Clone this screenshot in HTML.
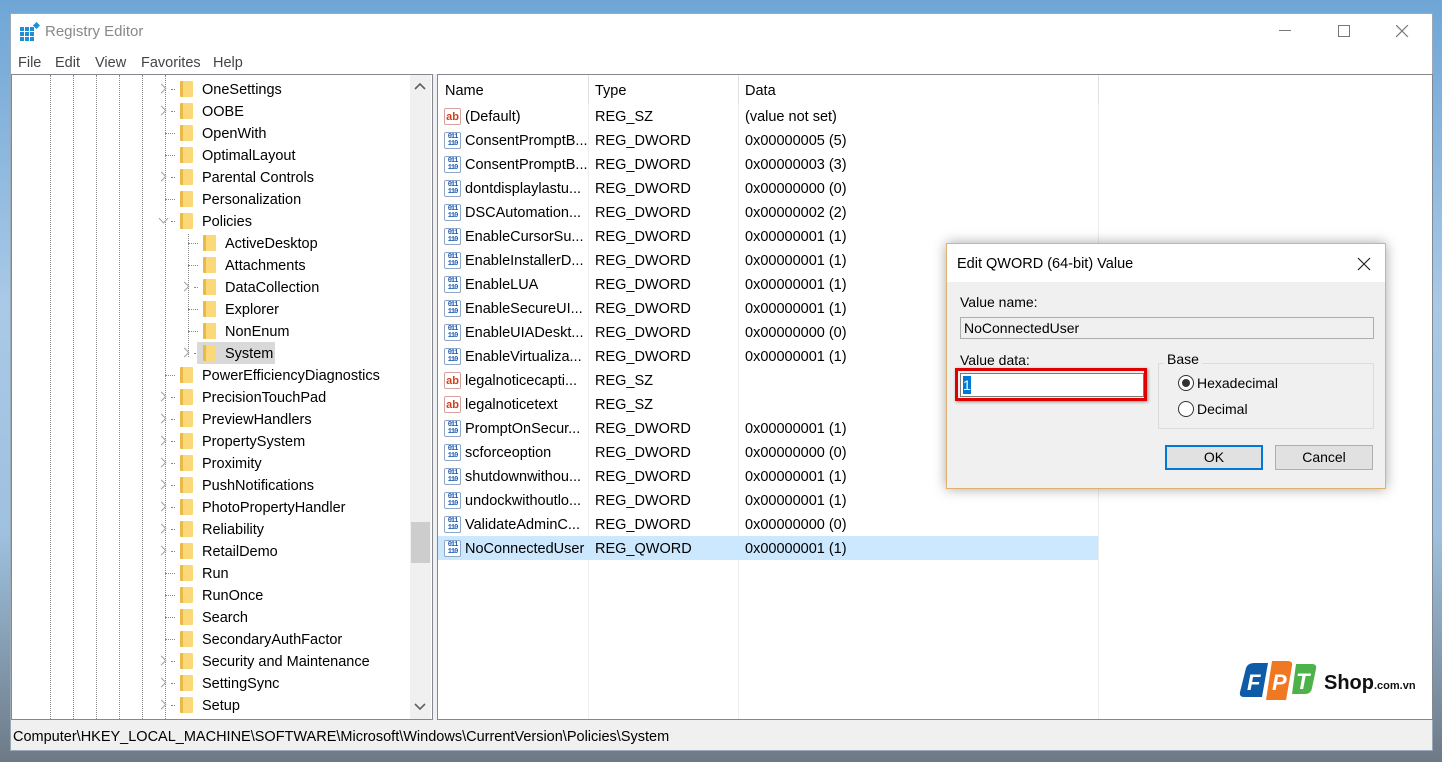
<!DOCTYPE html><html><head><style>
*{margin:0;padding:0;box-sizing:border-box}
body{width:1442px;height:762px;overflow:hidden;position:relative;font-family:"Liberation Sans",sans-serif;font-size:14.5px;color:#000;background:linear-gradient(180deg,#6fa6d6 0%,#a9c9e6 40%,#9ec1df 70%,#6d7a86 100%)}
.a{position:absolute}
.win{left:10px;top:13px;width:1423px;height:738px;background:#f0f0f0;border:1px solid #9aa8b8}
.row{position:absolute;height:22px;line-height:22px;white-space:nowrap}
.fold{position:absolute;width:13px;height:16px;background:linear-gradient(90deg,#e9b94a 0 3px,#fbd978 3px);border-radius:1px}
.chev{position:absolute;width:7px;height:7px;border-right:1.6px solid #a0a0a0;border-bottom:1.6px solid #a0a0a0}
.vl{position:absolute;width:0;border-left:1px dotted #888}
.hl{position:absolute;height:0;border-top:1px dotted #888}
.lr{position:absolute;left:438px;width:660px;height:24px;line-height:24px;white-space:nowrap}
.lr span{position:absolute}
.ico{position:absolute;left:6px;top:4px;width:17px;height:17px;border:1px solid #8ea6c8;background:#fff;border-radius:2px;font:bold 7px/7px "Liberation Mono",monospace;color:#1b5bb0;text-align:center;padding-top:1px;letter-spacing:-1px}
.ab{color:#d04020;font:bold 11px/14px "Liberation Sans",sans-serif;border-color:#d9a0a0;letter-spacing:0}
.d{font-size:14px}
</style></head><body>
<div class="a win"></div>
<div class="a" style="left:11px;top:14px;width:1421px;height:60px;background:#fff"></div>
<svg class="a" style="left:20px;top:22px" width="20" height="20"><g fill="#1e8fd6"><rect x="0" y="5" width="4" height="4"/><rect x="5" y="5" width="4" height="4"/><rect x="10" y="5" width="4" height="4"/><rect x="0" y="10" width="4" height="4"/><rect x="5" y="10" width="4" height="4"/><rect x="10" y="10" width="4" height="4"/><rect x="0" y="15" width="4" height="4"/><rect x="5" y="15" width="4" height="4"/><rect x="10" y="15" width="4" height="4"/></g><rect x="14" y="1" width="5" height="5" fill="#1e8fd6" transform="rotate(45 16.5 3.5)"/></svg>
<div class="a" style="left:45px;top:23px;color:#888;font-size:15px">Registry Editor</div>
<div class="a" style="left:1279px;top:30px;width:12px;height:1px;background:#777"></div>
<div class="a" style="left:1338px;top:25px;width:12px;height:12px;border:1px solid #777"></div>
<svg class="a" style="left:1396px;top:25px" width="13" height="13"><path d="M0 0L12 12M12 0L0 12" stroke="#777" stroke-width="1.2"/></svg>
<div class="a" style="left:18px;top:55px;color:#444">File</div>
<div class="a" style="left:55px;top:55px;color:#444">Edit</div>
<div class="a" style="left:95px;top:55px;color:#444">View</div>
<div class="a" style="left:141px;top:55px;color:#444">Favorites</div>
<div class="a" style="left:213px;top:55px;color:#444">Help</div>
<div class="a" style="left:11px;top:74px;width:422px;height:646px;background:#fff;border:1px solid #828790;overflow:hidden">
<div class="vl" style="left:38px;top:0;height:650px"></div>
<div class="vl" style="left:61px;top:0;height:650px"></div>
<div class="vl" style="left:84px;top:0;height:650px"></div>
<div class="vl" style="left:107px;top:0;height:650px"></div>
<div class="vl" style="left:130px;top:0;height:650px"></div>
<div class="vl" style="left:153px;top:0;height:650px"></div>
<div class="vl" style="left:176px;top:159px;height:123px"></div>
</div>
<div id="tree"></div>
<div class="a" style="left:410px;top:75px;width:21px;height:644px;background:#f0f0f0"></div>
<div class="a" style="left:411px;top:522px;width:19px;height:41px;background:#cdcdcd"></div>
<svg class="a" style="left:414px;top:83px" width="12" height="8"><path d="M1 6L6 1L11 6" fill="none" stroke="#606060" stroke-width="1.6"/></svg>
<svg class="a" style="left:414px;top:703px" width="12" height="8"><path d="M1 1L6 6L11 1" fill="none" stroke="#606060" stroke-width="1.6"/></svg>
<div class="a" style="left:437px;top:74px;width:996px;height:646px;background:#fff;border:1px solid #828790"></div>
<div class="a" style="left:588px;top:75px;width:1px;height:644px;background:#eeeeee"></div>
<div class="a" style="left:738px;top:75px;width:1px;height:644px;background:#eeeeee"></div>
<div class="a" style="left:1098px;top:75px;width:1px;height:644px;background:#eeeeee"></div>
<div class="a" style="left:588px;top:76px;width:1px;height:28px;background:#e0e0e0"></div>
<div class="a" style="left:738px;top:76px;width:1px;height:28px;background:#e0e0e0"></div>
<div class="a" style="left:1098px;top:76px;width:1px;height:28px;background:#e0e0e0"></div>
<div class="a" style="left:445px;top:83px">Name</div>
<div class="a" style="left:595px;top:83px">Type</div>
<div class="a" style="left:745px;top:83px">Data</div>
<div id="list"></div>
<div class="a" style="left:13px;top:729px;font-size:14.5px">Computer\HKEY_LOCAL_MACHINE\SOFTWARE\Microsoft\Windows\CurrentVersion\Policies\System</div>
<svg class="a" style="left:1238px;top:660px" width="82" height="42">
<path d="M8 8Q10 3 16 3H30L24 37H6Q1 37 2 32Z" fill="#0f5ba8"/>
<path d="M34 1H50Q55 1 54 6L48 40H28Z" fill="#f07822"/>
<path d="M58 4H74Q79 4 78 9L74 28Q73 34 67 34H54Z" fill="#4db24a"/>
<text x="9" y="30" fill="#fff" font-family="Liberation Sans" font-style="italic" font-weight="bold" font-size="22">F</text>
<text x="34" y="30" fill="#fff" font-family="Liberation Sans" font-style="italic" font-weight="bold" font-size="22">P</text>
<text x="58" y="29" fill="#fff" font-family="Liberation Sans" font-style="italic" font-weight="bold" font-size="22">T</text>
</svg>
<div class="a" style="left:1324px;top:672px;font-weight:bold;font-size:20px;color:#111">Shop<span style="font-size:11px">.com.vn</span></div>
<div class="a" style="left:946px;top:243px;width:440px;height:246px;background:#f0f0f0;border:1px solid #e0b070;box-shadow:0 0 12px rgba(0,0,0,.35)">
<div class="a" style="left:0;top:0;width:438px;height:38px;background:#fff"></div>
<div class="a" style="left:10px;top:12px;font-size:14.5px">Edit QWORD (64-bit) Value</div>
<svg class="a" style="left:410px;top:13px" width="14" height="14"><path d="M1 1L13 13M13 1L1 13" stroke="#222" stroke-width="1.2"/></svg>
<div class="a d" style="left:13px;top:50px">Value name:</div>
<div class="a d" style="left:13px;top:73px;width:414px;height:22px;border:1px solid #adadad;background:#f0f0f0;line-height:20px;padding-left:3px">NoConnectedUser</div>
<div class="a d" style="left:13px;top:108px">Value data:</div>
<div class="a" style="left:8px;top:124px;width:192px;height:33px;border:3px solid #e00000;box-shadow:1px 1px 3px rgba(0,0,0,.4)"></div>
<div class="a" style="left:13px;top:129px;width:184px;height:24px;border:1px solid #7a7a7a;background:#fff"></div>
<div class="a" style="left:16px;top:132px;width:8px;height:18px;background:#0078d7;color:#fff;font-size:14px;line-height:18px">1</div>
<div class="a" style="left:211px;top:119px;width:216px;height:66px;border:1px solid #dcdcdc"></div>
<div class="a d" style="left:217px;top:107px;background:#f0f0f0;padding:0 3px">Base</div>
<div class="a" style="left:231px;top:131px;width:16px;height:16px;border:1px solid #333;border-radius:50%;background:#fff"></div>
<div class="a" style="left:235px;top:135px;width:8px;height:8px;border-radius:50%;background:#333"></div>
<div class="a d" style="left:250px;top:131px">Hexadecimal</div>
<div class="a" style="left:231px;top:157px;width:16px;height:16px;border:1px solid #333;border-radius:50%;background:#fff"></div>
<div class="a d" style="left:250px;top:157px">Decimal</div>
<div class="a d" style="left:218px;top:201px;width:98px;height:25px;border:1px solid #0078d7;background:#e1e1e1;text-align:center;line-height:23px;box-shadow:inset 0 0 0 1px #0078d7">OK</div>
<div class="a d" style="left:328px;top:201px;width:98px;height:25px;border:1px solid #adadad;background:#e1e1e1;text-align:center;line-height:23px">Cancel</div>
</div>
<script>
var T=[["OneSettings",1,0],["OOBE",1,0],["OpenWith",0,0],["OptimalLayout",0,0],["Parental Controls",1,0],["Personalization",0,0],["Policies",2,0],["ActiveDesktop",0,1],["Attachments",0,1],["DataCollection",1,1],["Explorer",0,1],["NonEnum",0,1],["System",1,1],["PowerEfficiencyDiagnostics",0,0],["PrecisionTouchPad",1,0],["PreviewHandlers",1,0],["PropertySystem",1,0],["Proximity",1,0],["PushNotifications",1,0],["PhotoPropertyHandler",1,0],["Reliability",1,0],["RetailDemo",1,0],["Run",0,0],["RunOnce",0,0],["Search",0,0],["SecondaryAuthFactor",0,0],["Security and Maintenance",1,0],["SettingSync",1,0],["Setup",1,0],["",0,0]];
var h="";T.forEach(function(t,i){var top=78+22*i,o=t[2]?23:0;if(top>712)return;
h+='<div class="hl" style="left:'+(t[1]?171:165)+'px;top:'+(top+11)+'px;width:'+(t[1]?4:10)+'px;'+(o?'margin-left:23px;':'')+'"></div>';
if(t[1]==1)h+='<div class="chev" style="left:'+(158+o)+'px;top:'+(top+7)+'px;transform:rotate(-45deg)"></div>';
if(t[1]==2)h+='<div class="chev" style="left:'+(160+o)+'px;top:'+(top+5)+'px;transform:rotate(45deg)"></div>';
if(t[0]=="System")h+='<div class="a" style="left:197px;top:'+(top)+'px;width:78px;height:22px;background:#d9d9d9"></div>';
h+='<div class="fold" style="left:'+(180+o)+'px;top:'+(top+3)+'px"></div>';
h+='<div class="row" style="left:'+(202+o)+'px;top:'+(top+1)+'px">'+t[0]+'</div>';});
document.getElementById("tree").innerHTML=h;
var L=[["(Default)","REG_SZ","(value not set)",1],["ConsentPromptB...","REG_DWORD","0x00000005 (5)"],["ConsentPromptB...","REG_DWORD","0x00000003 (3)"],["dontdisplaylastu...","REG_DWORD","0x00000000 (0)"],["DSCAutomation...","REG_DWORD","0x00000002 (2)"],["EnableCursorSu...","REG_DWORD","0x00000001 (1)"],["EnableInstallerD...","REG_DWORD","0x00000001 (1)"],["EnableLUA","REG_DWORD","0x00000001 (1)"],["EnableSecureUI...","REG_DWORD","0x00000001 (1)"],["EnableUIADeskt...","REG_DWORD","0x00000000 (0)"],["EnableVirtualiza...","REG_DWORD","0x00000001 (1)"],["legalnoticecapti...","REG_SZ","",1],["legalnoticetext","REG_SZ","",1],["PromptOnSecur...","REG_DWORD","0x00000001 (1)"],["scforceoption","REG_DWORD","0x00000000 (0)"],["shutdownwithou...","REG_DWORD","0x00000001 (1)"],["undockwithoutlo...","REG_DWORD","0x00000001 (1)"],["ValidateAdminC...","REG_DWORD","0x00000000 (0)"],["NoConnectedUser","REG_QWORD","0x00000001 (1)"]];
h="";L.forEach(function(r,i){var top=104+24*i;h+='<div class="lr" style="top:'+top+'px;'+(i==18?'background:#cce8ff':'')+'">'+(r[3]?'<div class="ico ab">ab</div>':'<div class="ico">011<br>110</div>')+'<span style="left:27px;top:1px">'+r[0]+'</span><span style="left:157px;top:1px">'+r[1]+'</span><span style="left:307px;top:1px">'+r[2]+'</span></div>';});
document.getElementById("list").innerHTML=h;
</script>
</body></html>
